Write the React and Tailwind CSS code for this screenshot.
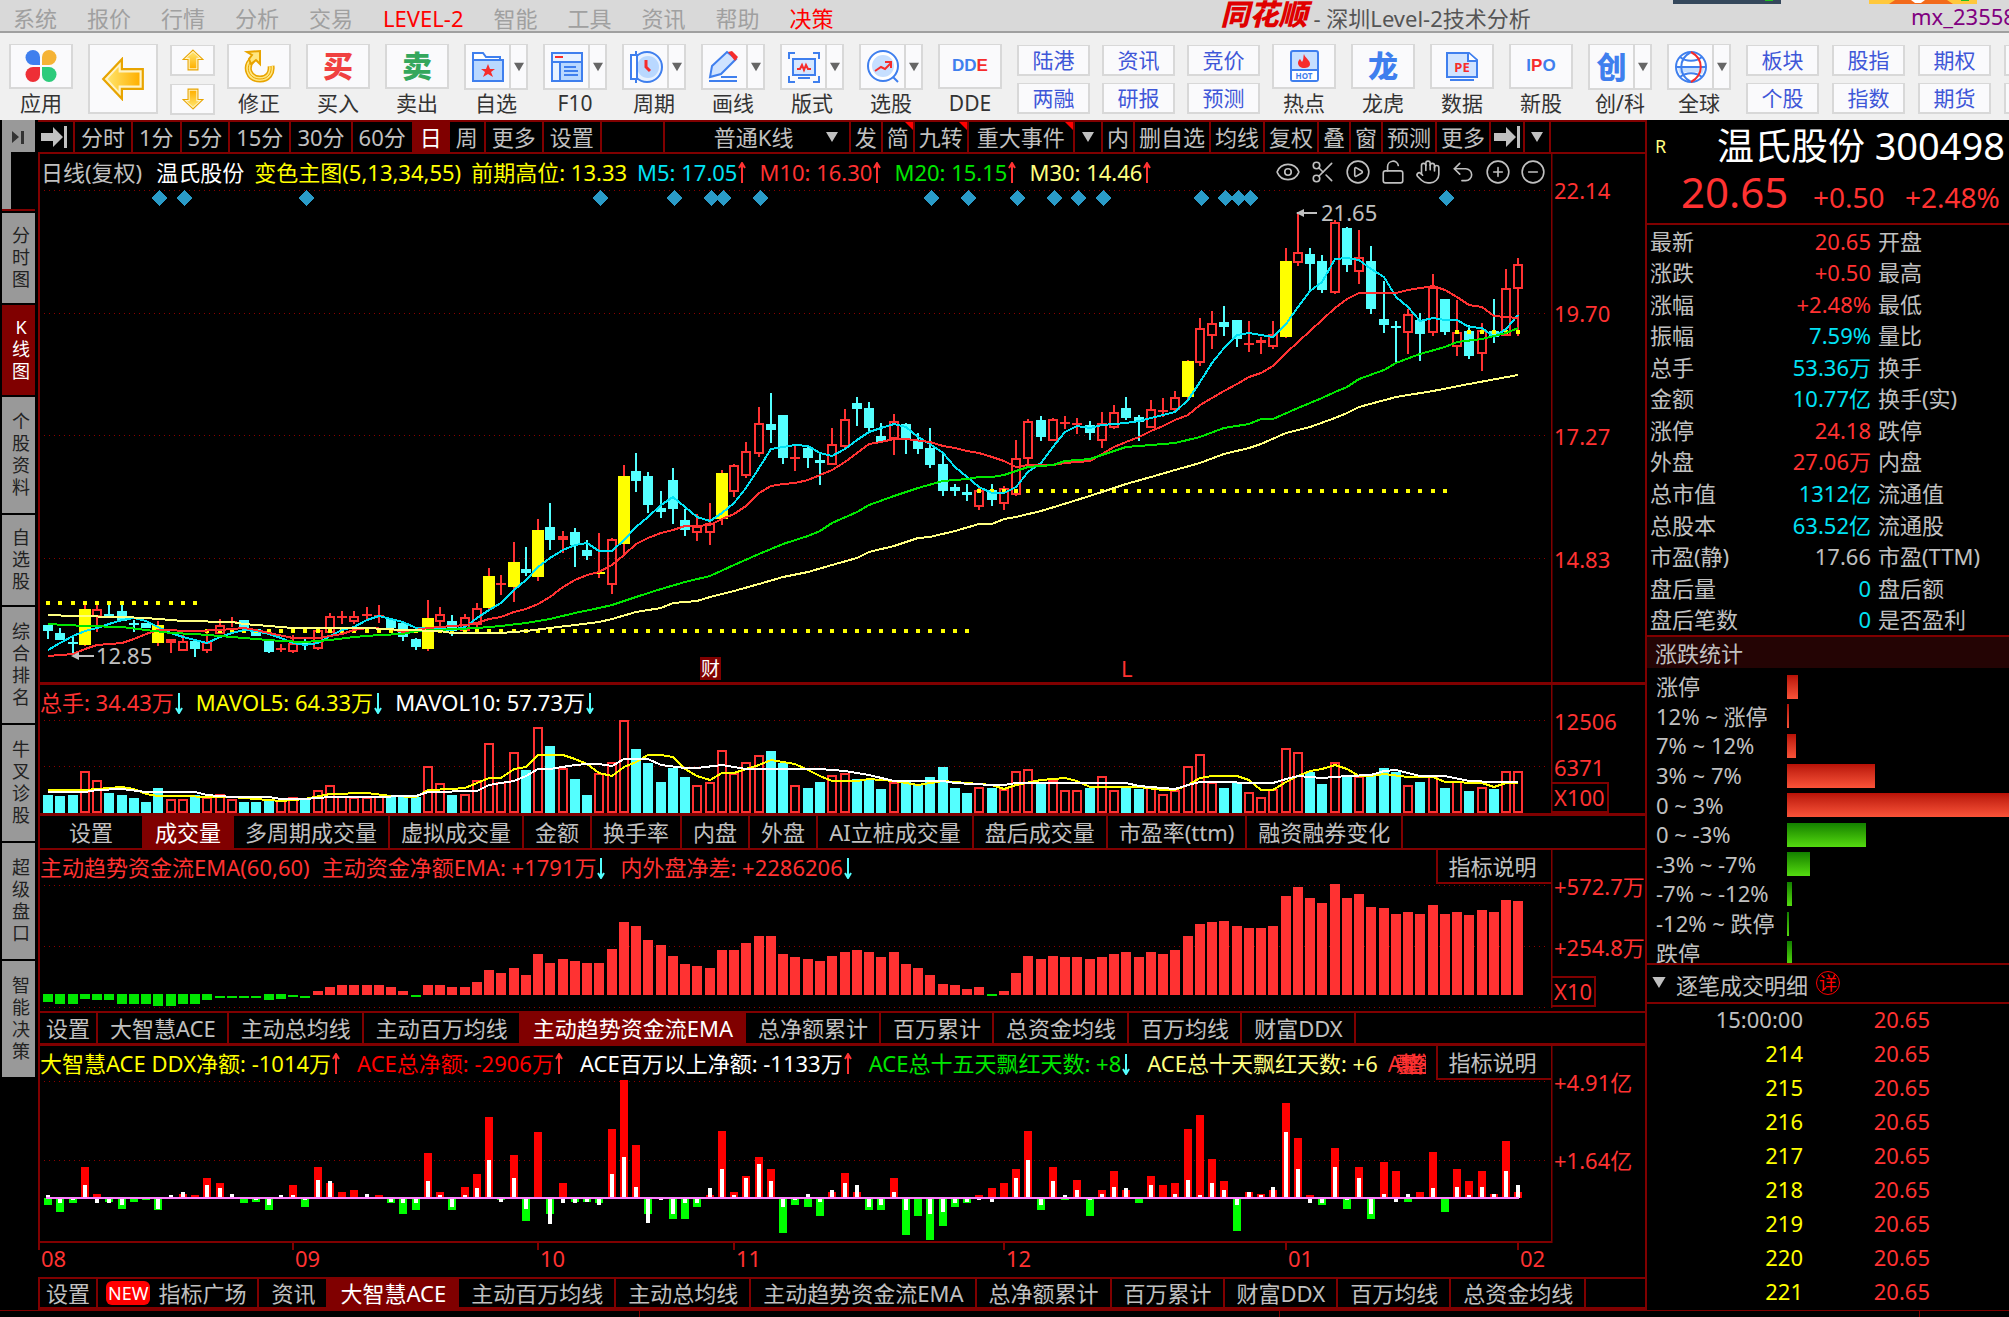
import {
  Eye,
  Scissors,
  CirclePlay,
  LockOpen,
  Hand,
  Undo2,
  CirclePlus,
  CircleMinus,
} from "lucide-react";

const STEP = 12.254;
const barX = (i) => Math.round(48 + STEP * i);

// kind, high, body top, body bottom, low
// r = rising, c = falling, y = highlighted, f = flat rising
const candles = [
  ["c", 625, 625, 631, 639], ["c", 628, 633, 640, 640], ["c", 637, 642, 644, 653],
  ["y", 605, 609, 645, 646], ["r", 605, 609, 615, 632], ["c", 605, 614, 616, 616],
  ["c", 605, 611, 621, 621], ["c", 620, 623, 625, 632], ["c", 623, 623, 628, 628],
  ["y", 621, 625, 643, 646], ["f", 639, 639, 643, 653], ["r", 635, 641, 649, 650],
  ["c", 641, 641, 649, 657], ["r", 630, 642, 649, 653], ["r", 619, 625, 632, 632],
  ["f", 617, 621, 623, 627], ["c", 620, 620, 628, 628], ["c", 629, 629, 636, 636],
  ["c", 639, 639, 652, 653], ["f", 644, 648, 650, 652], ["r", 635, 643, 650, 653],
  ["c", 639, 642, 644, 650], ["r", 630, 630, 647, 650], ["r", 613, 616, 631, 631],
  ["f", 611, 616, 618, 624], ["r", 611, 616, 620, 624], ["f", 607, 614, 616, 620],
  ["f", 605, 615, 617, 623], ["c", 619, 619, 628, 628], ["c", 621, 623, 637, 641],
  ["c", 638, 639, 647, 650], ["y", 600, 618, 649, 651], ["r", 607, 614, 620, 627],
  ["c", 615, 621, 631, 636], ["r", 614, 617, 629, 632], ["r", 603, 608, 623, 628],
  ["y", 568, 576, 608, 609], ["f", 575, 583, 585, 595], ["y", 542, 562, 587, 602],
  ["c", 547, 569, 573, 576], ["y", 519, 530, 577, 581], ["c", 503, 527, 540, 550],
  ["f", 531, 536, 540, 553], ["c", 528, 532, 545, 567], ["c", 540, 550, 556, 560],
  ["y", 533, 572, 574, 578], ["r", 538, 539, 583, 594], ["y", 465, 476, 544, 555],
  ["c", 453, 471, 481, 492], ["c", 472, 476, 505, 513], ["c", 491, 508, 512, 518],
  ["c", 468, 480, 509, 524], ["c", 509, 520, 530, 536], ["r", 514, 526, 531, 541],
  ["r", 503, 523, 531, 545], ["y", 470, 473, 519, 525], ["r", 464, 465, 490, 497],
  ["r", 442, 451, 474, 478], ["r", 407, 423, 452, 457], ["c", 393, 424, 430, 443],
  ["c", 415, 415, 458, 464], ["f", 446, 457, 459, 471], ["c", 445, 448, 458, 468],
  ["c", 453, 460, 463, 485], ["r", 428, 444, 463, 464], ["r", 409, 419, 445, 448],
  ["c", 397, 403, 409, 426], ["c", 402, 408, 428, 432], ["c", 423, 436, 442, 443],
  ["r", 414, 421, 437, 455], ["c", 423, 424, 439, 454], ["c", 433, 441, 449, 454],
  ["c", 428, 448, 465, 468], ["c", 453, 464, 491, 496], ["c", 484, 487, 491, 496],
  ["c", 484, 492, 495, 501], ["r", 488, 490, 505, 510], ["c", 484, 490, 500, 506],
  ["r", 486, 488, 502, 510], ["r", 440, 458, 493, 496], ["r", 419, 421, 457, 464],
  ["c", 416, 420, 437, 441], ["r", 418, 419, 439, 441], ["f", 416, 422, 424, 429],
  ["f", 418, 423, 425, 434], ["c", 421, 425, 433, 440], ["r", 412, 423, 439, 448],
  ["r", 405, 412, 426, 429], ["c", 397, 408, 418, 420], ["c", 415, 417, 422, 441],
  ["r", 400, 409, 426, 427], ["f", 398, 410, 412, 417], ["r", 391, 397, 408, 411],
  ["y", 360, 361, 397, 399], ["r", 318, 328, 361, 366], ["r", 311, 323, 334, 349],
  ["c", 306, 322, 327, 336], ["c", 320, 320, 339, 347], ["f", 321, 343, 345, 352],
  ["f", 337, 340, 343, 354], ["r", 321, 334, 345, 349], ["y", 248, 261, 337, 338],
  ["r", 213, 252, 261, 266], ["c", 248, 254, 264, 291], ["c", 255, 261, 290, 293],
  ["r", 220, 222, 291, 294], ["c", 227, 228, 265, 272], ["r", 230, 257, 270, 284],
  ["c", 246, 261, 309, 314], ["c", 281, 319, 325, 333], ["c", 321, 326, 328, 363],
  ["r", 309, 314, 331, 354], ["c", 313, 320, 334, 361], ["r", 274, 287, 331, 336],
  ["c", 299, 299, 332, 335], ["r", 300, 332, 345, 356], ["c", 325, 331, 356, 359],
  ["r", 323, 330, 352, 371], ["c", 299, 331, 337, 343], ["r", 269, 288, 334, 336],
  ["r", 258, 264, 287, 336],
];

const m5 = [
  650, 643, 636, 631, 628, 624, 620, 618, 621, 627, 633, 637, 640, 643, 637, 633, 630, 631, 634, 638,
  643, 645, 643, 636, 630, 627, 620, 616, 619, 622, 628, 628, 629, 630, 627, 618, 610, 603, 590, 580,
  567, 558, 550, 545, 543, 551, 551, 540, 527, 517, 505, 497, 507, 517, 521, 513, 503, 488, 468, 449,
  447, 445, 446, 453, 456, 449, 440, 432, 428, 424, 427, 437, 444, 453, 467, 477, 487, 493, 493, 487,
  472, 463, 447, 432, 426, 428, 425, 424, 423, 421, 418, 415, 412, 400, 382, 363, 348, 335, 333, 335,
  337, 324, 307, 291, 282, 259, 258, 260, 269, 277, 297, 307, 321, 318, 320, 320, 327, 328, 337, 329, 315,
].map((y, i) => [i, y]);

const m10 = [
  [0, 656], [2, 654], [3, 649], [4, 645], [6, 643], [7, 639], [8, 634], [9, 630], [12, 631], [14, 630],
  [16, 628], [17, 630], [18, 633], [20, 638], [22, 638], [24, 634], [25, 630], [26, 628], [28, 629], [29, 632],
  [31, 628], [32, 627], [34, 625], [35, 623], [36, 619], [37, 617], [38, 612], [39, 609], [40, 604], [41, 597],
  [42, 587], [43, 580], [44, 575], [45, 572], [46, 565], [47, 555], [48, 544], [49, 538], [50, 533], [51, 530],
  [52, 526], [53, 526], [54, 525], [55, 519], [56, 514], [57, 506], [58, 493], [59, 486], [60, 484], [61, 483],
  [62, 480], [63, 475], [64, 470], [65, 462], [66, 453], [67, 444], [68, 442], [69, 439], [70, 439], [72, 442],
  [73, 446], [74, 448], [75, 451], [76, 453], [77, 457], [78, 461], [79, 467], [80, 465], [82, 465], [83, 463],
  [85, 461], [86, 454], [87, 447], [88, 442], [89, 437], [90, 431], [91, 426], [92, 420], [93, 415], [94, 405],
  [95, 398], [96, 391], [97, 384], [98, 377], [99, 373], [100, 366], [101, 353], [102, 342], [103, 331], [104, 320],
  [105, 308], [106, 299], [107, 293], [110, 293], [111, 290], [113, 286], [114, 290], [115, 297], [116, 305], [117, 307],
  [118, 316], [120, 318],
];

const m20 = [
  [0, 624], [3, 626], [6, 627], [8, 630], [10, 633], [12, 634], [14, 636], [17, 639], [19, 641], [21, 642],
  [23, 640], [25, 637], [27, 635], [29, 634], [30, 631], [35, 628], [37, 626], [39, 623], [41, 619], [43, 613],
  [45, 608], [46, 605], [48, 597], [50, 589], [52, 582], [54, 576], [56, 565], [58, 554], [60, 544], [62, 536],
  [63, 531], [64, 523], [66, 512], [67, 505], [69, 496], [71, 488], [73, 481], [75, 479], [76, 477], [77, 477],
  [78, 475], [80, 467], [82, 465], [83, 461], [85, 459], [87, 451], [88, 447], [90, 445], [92, 443], [94, 437],
  [96, 428], [98, 424], [99, 419], [100, 419], [102, 408], [104, 398], [105, 392], [106, 387], [107, 379], [109, 370],
  [110, 363], [112, 354], [114, 347], [115, 342], [117, 339], [119, 333], [120, 328],
];

const m30 = [
  [0, 615], [2, 616], [6, 617], [8, 618], [11, 621], [15, 622], [16, 624], [18, 626], [20, 628], [26, 628],
  [29, 630], [32, 631], [33, 633], [37, 633], [39, 631], [41, 628], [43, 625], [45, 622], [46, 619], [48, 612],
  [50, 608], [51, 603], [53, 601], [54, 597], [56, 591], [58, 584], [60, 577], [62, 572], [64, 565], [66, 558],
  [67, 552], [69, 546], [71, 538], [72, 537], [74, 531], [76, 524], [77, 524], [78, 519], [79, 517], [81, 511],
  [84, 500], [86, 492], [88, 484], [90, 477], [92, 470], [94, 463], [96, 454], [98, 448], [99, 444], [101, 433],
  [103, 427], [105, 418], [106, 413], [107, 407], [110, 397], [113, 391], [116, 384], [120, 375],
];

// from bar, to bar, y
const highDots = [
  [0, 12, 603],
  [13, 75, 631],
  [76, 114, 491],
  [115, 120, 332],
];

const eventDays = [9, 11, 21, 45, 51, 54, 55, 58, 72, 75, 79, 82, 84, 86, 94, 96, 97, 98, 114];

const volumes = [
  18, 17, 18, 42, 33, 20, 18, 15, 11, 25, 14, 14, 18, 16, 19, 14, 11, 11, 13, 13,
  16, 14, 23, 28, 17, 16, 16, 17, 17, 16, 16, 47, 30, 18, 19, 33, 70, 31, 61, 43,
  86, 67, 45, 34, 18, 40, 51, 93, 64, 50, 31, 45, 36, 28, 31, 63, 40, 51, 58, 62,
  50, 28, 25, 31, 38, 40, 34, 33, 24, 31, 31, 28, 36, 46, 25, 20, 26, 25, 24, 42,
  44, 31, 33, 23, 23, 25, 37, 23, 26, 24, 26, 19, 23, 47, 59, 31, 25, 30, 21, 16,
  24, 65, 61, 41, 29, 51, 37, 37, 37, 45, 41, 28, 31, 38, 25, 32, 22, 26, 24, 42, 42,
];
const fallingVolume = [
  0, 1, 2, 5, 6, 7, 8, 9, 12, 16, 17, 18, 21, 28, 29, 30, 33, 39, 41, 43, 44, 48, 49, 50, 51, 52, 59, 60,
  62, 63, 66, 67, 68, 70, 71, 72, 73, 74, 75, 77, 81, 85, 88, 89, 96, 97, 103, 104, 106, 108, 109, 110,
  112, 114, 116, 118,
];

const mavol5 = [
  [0, 790], [3, 790], [5, 788], [6, 787], [7, 789], [8, 794], [9, 796], [15, 797], [17, 799], [19, 801],
  [21, 799], [23, 794], [26, 793], [28, 796], [30, 797], [31, 790], [33, 789], [34, 788], [35, 783], [36, 778],
  [37, 778], [38, 769], [39, 767], [40, 755], [42, 755], [43, 759], [44, 764], [45, 773], [46, 776], [47, 767],
  [48, 762], [49, 755], [50, 755], [51, 757], [52, 769], [53, 776], [54, 780], [55, 773], [56, 773], [57, 769],
  [58, 765], [59, 760], [60, 762], [61, 764], [62, 770], [63, 776], [64, 781], [66, 781], [67, 779], [69, 781],
  [71, 785], [73, 781], [75, 783], [77, 785], [78, 789], [79, 785], [81, 780], [83, 778], [84, 781], [85, 787],
  [89, 787], [91, 790], [92, 790], [93, 785], [94, 778], [95, 776], [97, 776], [98, 780], [99, 790], [100, 790],
  [101, 782], [102, 776], [103, 771], [104, 769], [105, 765], [106, 769], [107, 776], [108, 776], [109, 774], [111, 777],
  [113, 777], [114, 782], [117, 783], [118, 787], [119, 783], [120, 783],
];

const mavol10 = [
  [0, 792], [3, 792], [4, 790], [6, 789], [8, 792], [12, 792], [13, 795], [15, 797], [18, 797], [19, 799],
  [21, 799], [23, 797], [26, 797], [30, 796], [31, 792], [35, 791], [36, 785], [37, 783], [38, 781], [39, 776],
  [40, 769], [41, 769], [43, 765], [44, 764], [45, 764], [46, 766], [47, 759], [49, 759], [50, 765], [52, 768],
  [53, 768], [55, 765], [57, 769], [63, 769], [65, 771], [67, 775], [69, 781], [73, 781], [74, 783], [77, 785],
  [78, 785], [79, 783], [88, 783], [89, 786], [91, 788], [92, 789], [93, 785], [94, 782], [100, 783], [101, 779],
  [102, 776], [104, 778], [106, 776], [108, 775], [109, 771], [110, 770], [112, 776], [114, 776], [116, 781], [118, 782],
  [120, 782],
];

const emaFlow = [
  -8, -10, -10, -5, -6, -6, -10, -10, -10, -12, -12, -10, -10, -6, -3, -3, -3, -3, -6, -5,
  -2, -3, 4, 8, 10, 10, 10, 10, 8, 4, -2, 10, 10, 8, 8, 13, 25, 22, 27, 20,
  41, 32, 36, 34, 32, 32, 46, 73, 69, 55, 50, 39, 31, 29, 27, 45, 45, 52, 59, 59,
  41, 38, 36, 34, 39, 43, 45, 43, 38, 43, 31, 27, 20, 11, 10, 6, 8, -1, 4, 22,
  39, 36, 39, 38, 38, 36, 38, 41, 43, 38, 43, 41, 45, 59, 71, 73, 74, 69, 67, 67,
  69, 99, 108, 97, 92, 111, 97, 101, 88, 87, 81, 83, 81, 90, 81, 83, 80, 85, 83, 95, 94,
];

// total net inflow, inflow of orders above one million
const aceFlow = [
  [-7, 3], [-14, -5], [-5, -2], [31, 13], [4, -5], [-4, -5], [-11, -7], [-4, 0], [-2, 0], [-12, -11],
  [0, 3], [4, 6], [3, 0], [20, 13], [15, 10], [0, 4], [-5, 0], [-4, -2], [-12, -7], [0, 3],
  [13, 3], [-9, -2], [31, 18], [15, 17], [6, 0], [8, 0], [0, 4], [3, 0], [-5, -4], [-16, -5],
  [-12, -5], [45, 17], [6, 3], [-12, -9], [11, 3], [24, 10], [81, 38], [-2, -4], [43, 20], [-23, -11],
  [66, 0], [-16, -26], [15, -5], [-4, -5], [-4, -4], [-5, -7], [69, 24], [118, 41], [53, 11], [-16, -25],
  [0, -2], [-21, -16], [-21, -5], [-9, -5], [3, 10], [67, 29], [6, 3], [22, 20], [41, 34], [29, 17],
  [-35, -9], [-7, -2], [-9, 4], [-18, -4], [6, 8], [25, 15], [6, 13], [-12, -9], [-12, -7], [20, 6],
  [-37, -12], [-18, 0], [-42, -16], [-28, -14], [-9, -5], [-5, -4], [3, -2], [10, -4], [15, 0], [29, 20],
  [67, 38], [-12, -7], [31, 17], [-2, 3], [18, 8], [-18, -2], [8, 4], [27, 11], [8, 10], [-5, 0],
  [22, 13], [13, 0], [15, 4], [69, 18], [83, 3], [39, 15], [17, 8], [-33, -7], [6, 6], [4, 3],
  [8, 11], [95, 66], [60, 29], [3, -5], [-7, -5], [50, 31], [-11, -2], [31, 20], [-21, -16], [36, 4],
  [27, -4], [-4, 4], [6, 0], [46, 10], [-14, 0], [29, 11], [17, 3], [27, 11], [4, 4], [57, 27], [6, 13],
];

const months = [[0, "08"], [20, "09"], [40, "10"], [56, "11"], [78, "12"], [101, "01"], [120, "02"]];

const menus = ["系统", "报价", "行情", "分析", "交易", "LEVEL-2", "智能", "工具", "资讯", "帮助", "决策"];

const sideTabs = ["分时图", "K线图", "个股资料", "自选股", "综合排名", "牛叉诊股", "超级盘口", "智能决策"];

const quotes = [
  ["最新", "20.65", "text-[#ff3232]", "开盘"],
  ["涨跌", "+0.50", "text-[#ff3232]", "最高"],
  ["涨幅", "+2.48%", "text-[#ff3232]", "最低"],
  ["振幅", "7.59%", "text-[#02e2f4]", "量比"],
  ["总手", "53.36万", "text-[#02e2f4]", "换手"],
  ["金额", "10.77亿", "text-[#02e2f4]", "换手(实)"],
  ["涨停", "24.18", "text-[#ff3232]", "跌停"],
  ["外盘", "27.06万", "text-[#ff3232]", "内盘"],
  ["总市值", "1312亿", "text-[#02e2f4]", "流通值"],
  ["总股本", "63.52亿", "text-[#02e2f4]", "流通股"],
  ["市盈(静)", "17.66", "text-[#c0c0c0]", "市盈(TTM)"],
  ["盘后量", "0", "text-[#02e2f4]", "盘后额"],
  ["盘后笔数", "0", "text-[#02e2f4]", "是否盈利"],
];

const spread = [
  ["涨停", 11, "up"],
  ["12% ~ 涨停", 2, "up"],
  ["7% ~ 12%", 9, "up"],
  ["3% ~ 7%", 88, "up"],
  ["0 ~ 3%", 240, "up"],
  ["0 ~ -3%", 79, "down"],
  ["-3% ~ -7%", 23, "down"],
  ["-7% ~ -12%", 5, "down"],
  ["-12% ~ 跌停", 2, "down"],
  ["跌停", 5, "down"],
];

const ticks = ["15:00:00", "214", "215", "216", "217", "218", "219", "220", "221"];

const BLUE = "#3f7fee";
const RED = "#f62c2c";

const Line = ({ points, color }) => (
  <polyline
    points={points.map(([i, y]) => `${barX(i)},${y}`).join(" ")}
    fill="none"
    stroke={color}
    strokeWidth="2"
  />
);

const Grid = ({ ys }) =>
  ys.map((y) => (
    <line key={y} x1="44" x2="1548" y1={y + 0.5} y2={y + 0.5} stroke="#8c0000" strokeDasharray="1 4" />
  ));

const Plot = ({ top, height, className, children }) => (
  <svg
    viewBox={`40 ${top} 1511 ${height}`}
    preserveAspectRatio="none"
    className={`block w-full ${className}`}
    shapeRendering="crispEdges"
  >
    {children}
  </svg>
);

// Price scale right of a plot, labels are [y, text]; unit sits in a box at unitY
const Axis = ({ top, height, labels, unit, unitY, unitWidth, lineEnd }) => (
  <svg viewBox={`0 ${top} 94 ${height}`} className="block w-[94px] shrink-0 self-start" height={height}>
    <line x1="0" x2="0" y1={top} y2={lineEnd ?? top + height} stroke="#800000" strokeWidth="3" />
    {labels.map(([y, text]) => (
      <text key={text} x="3" y={y + 8} fill="#ff3232" fontSize="22">
        {text}
      </text>
    ))}
    {unit && (
      <>
        <rect x="0" y={unitY} width={unitWidth} height="29" fill="none" stroke="#800000" strokeWidth="2" />
        <text x="3" y={unitY + 23} fill="#ff3232" fontSize="22">
          {unit}
        </text>
      </>
    )}
  </svg>
);

const Candle = ({ candle, i }) => {
  const [kind, high, top, bottom, low] = candle;
  const x = barX(i);
  const color = kind === "c" ? "#54ffff" : "#ff3232";
  return (
    <g>
      <rect x={x - 1} y={high} width="2" height={Math.max(top - high, 0)} fill={color} />
      <rect x={x - 1} y={bottom} width="2" height={Math.max(low - bottom, 0)} fill={color} />
      {kind === "r" ? (
        <rect x={x - 4} y={top + 1} width="8" height={bottom - top} fill="none" stroke={color} strokeWidth="2" />
      ) : (
        <rect
          x={kind === "y" ? x - 6 : x - 5}
          y={top}
          width={kind === "y" ? 12 : 10}
          height={bottom - top}
          fill={kind === "y" ? "#ffff00" : color}
        />
      )}
    </g>
  );
};

const Up = () => (
  <svg viewBox="0 0 12 22" className="inline-block h-[22px] w-3 align-[-3px]">
    <path d="M5 21V2M2 6l3-5 3 5" fill="none" stroke="#ff3232" strokeWidth="2" />
  </svg>
);

const Down = () => (
  <svg viewBox="0 0 12 22" className="inline-block h-[22px] w-3 align-[-3px]">
    <path d="M5 1v19M2 16l3 5 3-5" fill="none" stroke="#54ffff" strokeWidth="2" />
  </svg>
);

const Caret = ({ className }) => (
  <svg viewBox="0 0 12 10" className={`h-[10px] w-3 ${className}`}>
    <path d="M0 0h12L6 10z" fill="currentColor" />
  </svg>
);

const StepIcon = ({ className }) => (
  <svg viewBox="0 0 26 22" className={`h-[22px] w-[26px] ${className}`}>
    <path d="M0 7h12V1l10 10-10 10v-6H0zM23 0h3v22h-3z" fill="currentColor" />
  </svg>
);

const GoldArrow = ({ className }) => (
  <svg viewBox="0 0 40 40" className={className}>
    <defs>
      <linearGradient id="gold" x1="0" x2="1">
        <stop offset="0" stopColor="#ffe46b" />
        <stop offset="1" stopColor="#ffb000" />
      </linearGradient>
    </defs>
    <path d="M2 20 19 2v9h19v18H19v9z" fill="#fff3c4" stroke="#e8a400" strokeWidth="2" />
    <path d="M6 20 16 9v5h19v12H16v5z" fill="url(#gold)" />
  </svg>
);

const icons = {
  apps: (
    <>
      <path d="M8 0a7 7 0 0 1 7 7v8H8A7 7 0 0 1 8 0z" fill="#3f7fee" />
      <path d="M24 0a7 7 0 0 0-7 7v8h7A7 7 0 0 0 24 0z" fill="#f5b335" />
      <path d="M8 32a7 7 0 0 0 7-7v-8H8a7 7 0 0 0 0 15z" fill="#ee2f36" />
      <path d="M24 32a7 7 0 0 1-7-7v-8h7a7 7 0 0 1 0 15z" fill="#2ccb7b" />
    </>
  ),
  fix: (
    <g fill="none">
      <path d="M10 9C1 17 6 29 17 29c8 0 12-6 11-13" stroke="#e8a400" strokeWidth="7" />
      <path d="M10 9C1 17 6 29 17 29c8 0 12-6 11-13" stroke="#ffe680" strokeWidth="4" />
      <path d="M10 9C1 17 6 29 17 29c8 0 12-6 11-13" stroke="#e8a400" />
      <path d="M4 2 17 1v13l-4-4-5 4-2-5 3-4z" fill="#ffe680" stroke="#e8a400" strokeWidth="2" />
    </g>
  ),
  favorite: (
    <>
      <path d="M1 29V2h10l3 4h14v23z" fill="#fff" stroke={BLUE} strokeWidth="2" />
      <path d="M1 9h30v21H1z" fill="#b9d8ff" stroke={BLUE} strokeWidth="2" />
      <path d="m16 13 2 5h5l-4 3 2 5-5-3-5 3 2-5-4-3h5z" fill={RED} />
    </>
  ),
  f10: (
    <>
      <path d="M1 2h30v28H1z" fill="#b9d8ff" stroke={BLUE} strokeWidth="2" />
      <path d="M2 3h28v7H2zM2 11h7v18H2z" fill="#e8f2ff" />
      <path d="M1 11h30M9 11v18M13 16h12M13 20h14M13 24h14" stroke={BLUE} strokeWidth="2" />
      <path d="M4 6h8" stroke={RED} strokeWidth="2" />
    </>
  ),
  period: (
    <>
      <circle cx="17" cy="16" r="15" fill="#e8f2ff" stroke={BLUE} strokeWidth="2" />
      <circle cx="18" cy="16" r="11" fill="#b9d8ff" />
      <path d="M1 4h6v24H1zM6 0v4M6 28v4" fill="#fff" stroke={BLUE} strokeWidth="2" />
      <path d="M16 9v7l4 4" fill="none" stroke={RED} strokeWidth="3" />
    </>
  ),
  draw: (
    <>
      <path d="m3 15 15-14 9 7-15 15-11 3z" fill="#cfe3ff" stroke={BLUE} strokeWidth="2" />
      <path d="m19 1 4-1 6 6-3 4z" fill={RED} />
      <path d="M12 26h16M0 30h28" stroke={BLUE} strokeWidth="2" />
    </>
  ),
  layout: (
    <>
      <path d="M1 8V2h6M25 2h6v6M31 25v6h-6M7 31H1v-6" fill="none" stroke={BLUE} strokeWidth="2" />
      <path d="M5 8h22v16H5z" fill="#d5e7ff" stroke={BLUE} strokeWidth="2" />
      <path d="M10 27h12" stroke={BLUE} strokeWidth="2" />
      <path d="M9 18h3l2-4 2 5 2-5 2 4h3" fill="none" stroke={RED} strokeWidth="2" />
    </>
  ),
  pick: (
    <>
      <circle cx="16" cy="15" r="15" fill="#fff" stroke={BLUE} strokeWidth="2" />
      <circle cx="16" cy="15" r="11" fill="#c6dfff" />
      <path d="m26 26 5 5" stroke={BLUE} strokeWidth="2" />
      <path d="m8 20 6-4 4 2 6-6M18 11h6v6" fill="none" stroke={RED} strokeWidth="2" />
    </>
  ),
  hot: (
    <>
      <rect x="3" y="1" width="27" height="30" rx="2" fill="#c6dfff" stroke={BLUE} strokeWidth="2" />
      <path d="M4 21h25v9H4z" fill="#fff" />
      <path d="M3 20h27" stroke={BLUE} strokeWidth="2" />
      <path d="M16 4c1 4 6 6 6 10 0 3-3 4-6 4s-6-2-6-5c0-2 1-3 2-4l2 3c2-3 1-5 2-8z" fill={RED} />
      <text x="16" y="29" textAnchor="middle" fontSize="8" fontWeight="700" fill={BLUE}>
        HOT
      </text>
    </>
  ),
  data: (
    <>
      <path d="M1 3h22l8 7v17H1z" fill="#cfe3ff" stroke={BLUE} strokeWidth="2" />
      <path d="M22 3v8h9" fill="#fff" stroke={BLUE} strokeWidth="2" />
      <path d="M4 30h24" stroke={BLUE} strokeWidth="2" />
      <text x="16" y="22" textAnchor="middle" fontSize="13" fontWeight="700" fill={RED}>
        PE
      </text>
    </>
  ),
  globe: (
    <g fill="none" strokeWidth="2">
      <circle cx="16" cy="16" r="15" fill="#fff" stroke={BLUE} />
      <path d="M3 16h26c0 3-1 5-2 7-7-3-15-3-22 0-1-2-2-4-2-7z" fill="#c6dfff" />
      <path d="M1 16h30M5 6c6 5 16 5 22 0M5 26c6-5 16-5 22 0M16 1C3 8 3 24 16 31" stroke={BLUE} />
      <path d="M16 1c13 7 13 23 0 30" stroke={RED} />
    </g>
  ),
};

const Glyph = ({ name }) => (
  <svg viewBox="-1 -1 34 34" className="size-[34px]">
    {icons[name]}
  </svg>
);

const boxStyle = "border-2 border-t border-[#d8d8d8] bg-[#fafafc]";

const ToolButton = ({ label, caret, children }) => (
  <button className="flex h-[72px] w-16 shrink-0 flex-col justify-between">
    <span className={`flex w-full items-stretch ${caret ? "h-[46px]" : "h-[45px]"} ${boxStyle}`}>
      <span className="flex flex-1 items-center justify-center">{children}</span>
      {caret && (
        <span className="flex w-[17px] items-center justify-center border-l-2 border-[#d8d8d8] text-[#666]">
          <Caret className="h-2 w-[10px]" />
        </span>
      )}
    </span>
    <span className="w-full text-center text-[21px] leading-[26px] text-[#333]">{label}</span>
  </button>
);

const SmallPair = ({ labels }) => (
  <div className="flex h-[70px] w-[73px] shrink-0 flex-col justify-between pt-px">
    {labels.map((label) => (
      <button key={label} className={`h-[31px] text-[21px] leading-7 text-[#3f57d8] ${boxStyle}`}>
        {label}
      </button>
    ))}
  </div>
);

const ChartTabs = ({ tabs, active, className, firstPad, pad = "pl-3 pr-[11px]" }) => (
  <div className={`flex overflow-hidden border-[#800000] whitespace-nowrap ${className}`}>
    {tabs.map((tab, i) => (
      <button
        key={tab}
        className={`flex shrink-0 items-center border-r-2 border-[#800000] ${i === 0 ? firstPad : pad} ${
          tab === active ? "bg-[#800000] text-white" : "text-[#c0c0c0]"
        }`}
      >
        {tab === "指标广场" && (
          <span className="-ml-1 mr-2 rounded-md bg-[#ff0000] px-[2px] text-[18px] leading-6 text-white">NEW</span>
        )}
        {tab}
      </button>
    ))}
  </div>
);

const Explain = () => (
  <button className="ml-auto h-full w-[115px] shrink-0 border-b-2 border-l-2 border-[#800000] pr-1 text-[#c0c0c0]">
    指标说明
  </button>
);

const TitleBar = () => (
  <header className="relative flex h-[33px] items-center overflow-hidden border-b-2 border-[#a0a0a0] bg-[#d9d9d9] whitespace-nowrap">
    <nav className="flex gap-[30px] pl-[13px] pt-1">
      {menus.map((menu) => (
        <a
          key={menu}
          href="#"
          className={menu === "LEVEL-2" || menu === "决策" ? "text-[#ff0000]" : "text-[#a0a0a0]"}
        >
          {menu}
        </a>
      ))}
    </nav>
    <div className="ml-[387px] flex items-center text-[#555]">
      <span className="mr-[6px] pb-1 text-[29px] font-black italic text-[#e00000]">同花顺</span>
      <span className="pt-1">- 深圳Level-2技术分析</span>
    </div>
    <span className="absolute left-[1911px] top-[2px] text-[#800080]">mx_235584</span>
    <svg viewBox="0 0 304 6" className="absolute left-[1673px] top-0 h-[6px] w-[304px]">
      <path d="M0 0h108v4H0z" fill="#35485c" />
      <path d="M196 0h108v4H196z" fill="#ffc83c" />
      <path d="M222 0h52l6 4h-64z" fill="#f26a1b" />
      <path d="M238 0h14l-4 3h-6z" fill="#fff" />
      <path d="M92 0h8v1h-8zM288 0h8v1h-8z" fill="#20c020" />
    </svg>
  </header>
);

const ToolBar = () => (
  <div className="flex h-[87px] items-start gap-[15px] overflow-hidden bg-[#f0f0f0] pl-[9px] pt-[11px] whitespace-nowrap">
    <ToolButton label="应用"><Glyph name="apps" /></ToolButton>
    <div className="flex gap-3">
      <button aria-label="返回" className={`flex h-[70px] w-[70px] shrink-0 items-center justify-center ${boxStyle}`}>
        <GoldArrow className="size-11" />
      </button>
      <div className="flex h-[71px] w-[45px] shrink-0 flex-col justify-between pt-px">
        <button aria-label="上一个" className={`flex h-[31px] items-center justify-center ${boxStyle}`}>
          <GoldArrow className="size-[22px] rotate-90" />
        </button>
        <button aria-label="下一个" className={`flex h-[31px] items-center justify-center ${boxStyle}`}>
          <GoldArrow className="size-[22px] -rotate-90" />
        </button>
      </div>
      <ToolButton label="修正"><Glyph name="fix" /></ToolButton>
    </div>
    <ToolButton label="买入"><span className="text-[30px] leading-8 font-black text-[#f04040]">买</span></ToolButton>
    <ToolButton label="卖出"><span className="text-[30px] leading-8 font-black text-[#34a75c]">卖</span></ToolButton>
    <ToolButton label="自选" caret><Glyph name="favorite" /></ToolButton>
    <ToolButton label="F10" caret><Glyph name="f10" /></ToolButton>
    <ToolButton label="周期" caret><Glyph name="period" /></ToolButton>
    <ToolButton label="画线" caret><Glyph name="draw" /></ToolButton>
    <ToolButton label="版式" caret><Glyph name="layout" /></ToolButton>
    <ToolButton label="选股" caret><Glyph name="pick" /></ToolButton>
    <ToolButton label="DDE">
      <span className="font-['Liberation_Sans_Narrow','Liberation_Sans',sans-serif] text-[17px] font-bold text-[#3f7fee]">
        DD<span className="text-[#f62c2c]">E</span>
      </span>
    </ToolButton>
    <div className="flex gap-3">
      <SmallPair labels={["陆港", "两融"]} />
      <SmallPair labels={["资讯", "研报"]} />
      <SmallPair labels={["竞价", "预测"]} />
      <ToolButton label="热点"><Glyph name="hot" /></ToolButton>
    </div>
    <ToolButton label="龙虎"><span className="text-[30px] leading-8 font-black text-[#3f7fee]">龙</span></ToolButton>
    <ToolButton label="数据"><Glyph name="data" /></ToolButton>
    <ToolButton label="新股">
      <span className="font-['Liberation_Sans_Narrow','Liberation_Sans',sans-serif] text-[17px] font-bold text-[#3f7fee]">
        I<span className="text-[#f62c2c]">P</span>O
      </span>
    </ToolButton>
    <ToolButton label="创/科" caret><span className="text-[30px] leading-8 font-black text-[#3f7fee]">创</span></ToolButton>
    <ToolButton label="全球" caret><Glyph name="globe" /></ToolButton>
    <div className="flex gap-[13px]">
      <SmallPair labels={["板块", "个股"]} />
      <SmallPair labels={["股指", "指数"]} />
      <SmallPair labels={["期权", "期货"]} />
      <SmallPair labels={["", " "]} />
    </div>
  </div>
);

const SideBar = () => (
  <aside className="flex w-[38px] shrink-0 flex-col gap-[2px] pl-[2px] pr-[3px] text-[18px] leading-[22px] text-[#222]">
    <div className="flex h-[91px] flex-col border-b-2 border-[#800000] bg-[#999]">
      <svg viewBox="0 0 33 30" className="h-[32px] w-[33px]">
        <path d="M10 10l7 6-7 6zM19 10h3v13h-3z" fill="#333" />
      </svg>
      <div className="ml-[9px] flex-1 bg-black" />
    </div>
    {sideTabs.map((tab) => (
      <button
        key={tab}
        className={`flex flex-col items-center justify-center pl-[5px] pb-[2px] ${
          tab.length === 3 ? "h-[90px]" : "h-[116px]"
        } ${tab === "K线图" ? "bg-[#800000] text-white" : "bg-[#999]"}`}
      >
        {tab.split("").map((char) => (
          <span key={char}>{char}</span>
        ))}
      </button>
    ))}
  </aside>
);

const PeriodBar = () => (
  <div className="flex h-[34px] items-stretch overflow-hidden border-y-2 border-[#800000] whitespace-nowrap text-[#c0c0c0]">
    <button aria-label="下一只" className="flex w-[37px] shrink-0 items-center justify-end border-r-2 border-[#800000] pr-[6px]">
      <StepIcon />
    </button>
    {["分时", "1分", "5分", "15分", "30分", "60分", "日", "周", "更多", "设置"].map((item) => (
      <button
        key={item}
        className={`shrink-0 border-r-2 border-[#800000] px-[6px] leading-[28px] ${
          item === "日" ? "bg-[#800000] text-white" : ""
        }`}
      >
        {item}
      </button>
    ))}
    <div className="ml-auto flex shrink-0">
      <label className="relative w-[188px] border-x-2 border-[#800000]">
        <select
          aria-label="K线类型"
          className="h-full w-full appearance-none bg-black pl-[49px] text-[#c0c0c0]"
        >
          <option>普通K线</option>
        </select>
        <Caret className="pointer-events-none absolute right-[11px] top-[10px]" />
      </label>
      {["发", "简", "九转", "重大事件", "▼", "内", "删自选", "均线", "复权", "叠", "窗", "预测", "更多"].map((item) => (
        <button
          key={item}
          aria-label={item === "▼" ? "事件列表" : item}
          className={`relative flex items-center border-r-2 border-[#800000] leading-[28px] ${
            item === "重大事件" ? "px-2" : "px-1"
          }`}
        >
          {item === "▼" ? <Caret className="mx-[3px]" /> : item}
          {["简", "九转", "重大事件"].includes(item) && (
            <span className="absolute right-0 top-0 size-0 border-t-8 border-l-8 border-t-[#ff0000] border-l-transparent" />
          )}
        </button>
      ))}
      <button aria-label="向右" className="border-r-2 border-[#800000] px-[3px]">
        <StepIcon />
      </button>
      <button aria-label="展开" className="border-r-2 border-[#800000] px-[6px]">
        <Caret />
      </button>
    </div>
    <div className="w-[94px] shrink-0" />
  </div>
);

const KLinePanel = () => (
  <section className="flex border-b-[3px] border-[#800000]">
    <div className="min-w-0 flex-1 border-l-2 border-[#800000]">
      <div className="flex h-8 items-center gap-[10px] pl-px pt-1 whitespace-nowrap">
        <span className="mr-1 text-[#c0c0c0]">日线(复权)</span>
        <span className="text-white">温氏股份</span>
        <span className="text-[#ffff00]">变色主图(5,13,34,55)</span>
        <span className="text-[#ffff00]">前期高位: 13.33</span>
        <span className="text-[#02e2f4]">M5: 17.05<Up /></span>
        <span className="text-[#ff3232]">M10: 16.30<Up /></span>
        <span className="text-[#00e600]">M20: 15.15<Up /></span>
        <span className="text-[#ffff80]">M30: 14.46<Up /></span>
        <div className="ml-auto flex gap-[9px] pr-[5px] text-[#c0c0c0]">
          {[Eye, Scissors, CirclePlay, LockOpen, Hand, Undo2, CirclePlus, CircleMinus].map((Icon, i) => (
            <Icon key={i} size={26} strokeWidth={1.5} />
          ))}
        </div>
      </div>
      <Plot top={186} height={496} className="h-[496px]">
        <Grid ys={[190, 313, 435, 558]} />
        {eventDays.map((i) => (
          <path key={i} d={`M${barX(i) + 1} 190l8 8-8 8-8-8z`} fill="#2a9bc8" />
        ))}
        {candles.map((candle, i) => (
          <Candle key={i} candle={candle} i={i} />
        ))}
        {highDots.map(([from, to, y]) =>
          Array.from({ length: to - from + 1 }, (_, n) => (
            <rect key={`${y}-${n}`} x={barX(from + n) - 2} y={y - 2} width="4" height="4" fill="#ffff00" />
          ))
        )}
        <Line points={m5} color="#02e2f4" />
        <Line points={m10} color="#ff3232" />
        <Line points={m20} color="#00e600" />
        <Line points={m30} color="#ffff80" />
        <g shapeRendering="auto">
          <path d="M1297 213h20M73 656h21" stroke="#c0c0c0" strokeWidth="2" />
          <path d="m1296 213 8-4v8zM71 656l8-4v8z" fill="#c0c0c0" />
        </g>
        <text x="1321" y="221" fontSize="22" fill="#c0c0c0">21.65</text>
        <text x="96" y="664" fontSize="22" fill="#c0c0c0">12.85</text>
        <path d="M700 657h21v23h-21z" fill="#800000" />
        <text x="701" y="676" fontSize="19" fill="#fff">财</text>
        <text x="1121" y="677" fontSize="22" fill="#ff3232">L</text>
      </Plot>
    </div>
    <Axis
      top={154}
      height={528}
      labels={[[191, "22.14"], [314, "19.70"], [437, "17.27"], [560, "14.83"]]}
    />
  </section>
);

const VolumePanel = () => (
  <section className="flex border-b-[3px] border-[#800000]">
    <div className="min-w-0 flex-1 border-l-2 border-[#800000]">
      <div className="flex h-[30px] items-center gap-[10px] pt-1 whitespace-nowrap">
        <span className="text-[#ff3232]">总手: 34.43万<Down /></span>
        <span className="text-[#ffff00]">MAVOL5: 64.33万<Down /></span>
        <span className="text-white">MAVOL10: 57.73万<Down /></span>
      </div>
      <Plot top={715} height={98} className="h-[98px]">
        <Grid ys={[720, 766]} />
        {volumes.map((h, i) =>
          fallingVolume.includes(i) ? (
            <rect key={i} x={barX(i) - 5} y={813 - h} width="10" height={h} fill="#54ffff" />
          ) : (
            <rect
              key={i}
              x={barX(i) - 4}
              y={814 - h}
              width="8"
              height={h - 2}
              fill="#000"
              stroke="#ff3232"
              strokeWidth="2"
            />
          )
        )}
        <Line points={mavol5} color="#ffff00" />
        <Line points={mavol10} color="#ffffff" />
      </Plot>
    </div>
    <Axis
      top={685}
      height={128}
      labels={[[722, "12506"], [768, "6371"]]}
      unit="X100"
      unitY={783}
      unitWidth={57}
    />
  </section>
);

const EmaPanel = () => (
  <section className="flex">
    <div className="min-w-0 flex-1 border-l-2 border-[#800000]">
      <div className="flex h-[34px] items-center gap-3 whitespace-nowrap text-[#ff3232]">
        <span>主动趋势资金流EMA(60,60)</span>
        <span>主动资金净额EMA: +1791万<Down /></span>
        <span>内外盘净差: +2286206<Down /></span>
        <Explain />
      </div>
      <Plot top={884} height={127} className="h-[127px]">
        <Grid ys={[885, 946, 1007]} />
        {emaFlow.map((h, i) => (
          <rect
            key={i}
            x={barX(i) - 5}
            y={h > 0 ? 995 - h : h < -3 ? 994 : 993 - h}
            width="10"
            height={h < 0 && h >= -3 ? 2 : Math.abs(h)}
            fill={h > 0 ? "#ff3232" : "#00e600"}
          />
        ))}
      </Plot>
    </div>
    <Axis
      top={850}
      height={161}
      labels={[[887, "+572.7万"], [948, "+254.8万"]]}
      unit="X10"
      unitY={977}
      unitWidth={44}
      lineEnd={1008}
    />
  </section>
);

const AcePanel = () => (
  <section>
    <div className="flex">
      <div className="min-w-0 flex-1 border-l-2 border-[#800000]">
        <div className="flex h-[34px] items-center gap-[14px] whitespace-nowrap">
          <span className="text-[#ffff00]">大智慧ACE DDX净额: -1014万<Up /></span>
          <span className="text-[#ff0000]">ACE总净额: -2906万<Up /></span>
          <span className="text-white">ACE百万以上净额: -1133万<Up /></span>
          <span className="text-[#00e600]">ACE总十五天飘红天数: +8<Down /></span>
          <span className="text-[#ffff80]">ACE总十天飘红天数: +6</span>
          <span className="-mx-1 grid min-w-0 flex-1 overflow-hidden text-[#ff3232]">
            <span className="col-start-1 row-start-1">A增额数</span>
            <span className="col-start-1 row-start-1 pl-2">飘额量</span>
            <span className="col-start-1 row-start-1 pl-3">整盘翻</span>
          </span>
          <Explain />
        </div>
        <Plot top={1080} height={163} className="h-[163px]">
          <Grid ys={[1081, 1160]} />
          {aceFlow.map(([total, large], i) => (
            <g key={i}>
              <rect
                x={barX(i) - 4}
                y={total > 0 ? 1198 - total : 1198}
                width="8"
                height={Math.abs(total)}
                fill={total > 0 ? "#ff0000" : "#00ff00"}
              />
              <rect
                x={barX(i) - 2}
                y={large > 0 ? 1198 - large : 1198}
                width="4"
                height={Math.abs(large)}
                fill="#fff"
              />
            </g>
          ))}
          <path d="M46 1198h1473" stroke="#ff80ff" strokeWidth="2" />
          <path d="M38 1242h1514" stroke="#800000" strokeWidth="2" />
        </Plot>
      </div>
      <Axis top={1046} height={197} labels={[[1083, "+4.91亿"], [1161, "+1.64亿"]]} />
    </div>
    <svg viewBox="38 1243 1607 34" preserveAspectRatio="none" className="block h-[34px] w-full">
      {months.map(([i, month]) => (
        <g key={month}>
          <path d={`M${i ? barX(i) : 39} 1243v7`} stroke="#800000" strokeWidth="2" />
          <text x={(i ? barX(i) : 39) + 2} y="1267" fontSize="22" fill="#ff3232">
            {month}
          </text>
        </g>
      ))}
    </svg>
  </section>
);

const QuotePanel = () => (
  <aside className="w-[364px] shrink-0 overflow-hidden border-l-2 border-[#800000] text-[#c0c0c0] whitespace-nowrap">
    <div className="h-[105px] border-b-2 border-[#800000]">
      <div className="flex h-[51px] items-center pl-2">
        <span className="w-[62px] text-[18px] text-[#ffff80]">R</span>
        <h1 className="text-[37px] leading-[51px] text-white">
          温氏股份 <span className="text-[38px]">300498</span>
        </h1>
      </div>
      <div className="flex h-[48px] items-baseline pl-[34px] text-[28px] text-[#ff3232]">
        <span className="w-[132px] text-[42px] leading-[42px]">20.65</span>
        <span className="w-[92px]">+0.50</span>
        <span>+2.48%</span>
      </div>
    </div>
    <table className="h-[410px] w-full table-fixed">
      <tbody>
        {quotes.map(([label, value, color, next]) => (
          <tr key={label} className="leading-6">
            <th className="w-[110px] p-0 pl-[3px] text-left font-normal">{label}</th>
            <td className={`w-[114px] p-0 text-right ${color}`}>{value}</td>
            <th className="p-0 pl-[7px] text-left font-normal">{next}</th>
          </tr>
        ))}
      </tbody>
    </table>
    <h2 className="h-[33px] border-t-2 border-[#800000] bg-[#240404] pl-2 leading-[33px]">涨跌统计</h2>
    <div className="h-[295px] overflow-hidden pt-1">
      <div className="grid h-[296px] auto-rows-fr">
        {spread.map(([label, width, side]) => (
          <div key={label} className="flex items-center">
            <span className="w-[140px] shrink-0 pl-[9px] leading-[29px]">{label}</span>
            <span
              className={`h-6 shrink-0 ${
                side === "up"
                  ? "bg-linear-to-b from-[#b81006] to-[#fa5238]"
                  : "bg-linear-to-b from-[#128000] to-[#54dc10]"
              }`}
              style={{ width }}
            />
          </div>
        ))}
      </div>
    </div>
    <h2 className="flex h-[41px] items-center border-y-2 border-[#800000] pl-[5px] pt-[2px]">
      <Caret className="mb-1 mr-[10px] h-[11px] w-[14px]" />
      逐笔成交明细
      <span className="mb-1 ml-2 flex size-6 items-center justify-center rounded-full border border-[#ff0000] text-[18px] text-[#ff0000]">
        详
      </span>
    </h2>
    <table className="h-[306px] w-full table-fixed">
      <tbody>
        {ticks.map((tick, i) => (
          <tr key={tick} className="leading-6">
            <td className={`w-[156px] p-0 pb-1 text-right ${i ? "text-[#ffff00]" : ""}`}>{tick}</td>
            <td className="w-[127px] p-0 pb-1 text-right text-[#ff3232]">20.65</td>
            <td />
          </tr>
        ))}
      </tbody>
    </table>
  </aside>
);

export default function App() {
  return (
    <div className="min-h-screen overflow-hidden bg-black font-['Noto_Sans','Noto_Sans_CJK_SC',sans-serif] text-[22px] leading-7">
      <TitleBar />
      <ToolBar />
      <div className="flex">
        <SideBar />
        <main className="min-w-0 flex-1">
          <PeriodBar />
          <KLinePanel />
          <VolumePanel />
          <ChartTabs
            className="h-[34px] border-b-2 border-l-2"
            active="成交量"
            firstPad="px-[29px]"
            pad="px-[11px]"
            tabs={["设置", "成交量", "多周期成交量", "虚拟成交量", "金额", "换手率", "内盘", "外盘", "AI立桩成交量", "盘后成交量", "市盈率(ttm)", "融资融券变化"]}
          />
          <EmaPanel />
          <ChartTabs
            className="h-[35px] border-t-2 border-b-[3px] border-l-2"
            active="主动趋势资金流EMA"
            firstPad="px-[6px]"
            tabs={["设置", "大智慧ACE", "主动总均线", "主动百万均线", "主动趋势资金流EMA", "总净额累计", "百万累计", "总资金均线", "百万均线", "财富DDX"]}
          />
          <AcePanel />
          <ChartTabs
            className="h-[33px] border-t-2 border-b-[3px] border-l-2"
            active="大智慧ACE"
            firstPad="px-[6px]"
            tabs={["设置", "指标广场", "资讯", "大智慧ACE", "主动百万均线", "主动总均线", "主动趋势资金流EMA", "总净额累计", "百万累计", "财富DDX", "百万均线", "总资金均线"]}
          />
        </main>
        <QuotePanel />
      </div>
      <footer className="flex h-[7px] border-t border-[#800000]">
        <div className="w-[640px] border-r border-[#800000]" />
        <div className="w-[640px] border-r border-[#800000]" />
        <div className="w-[640px] border-r border-[#800000]" />
      </footer>
    </div>
  );
}
